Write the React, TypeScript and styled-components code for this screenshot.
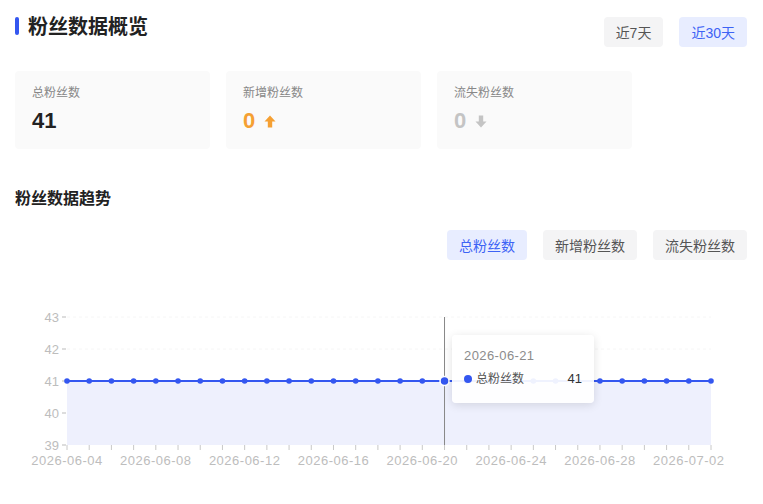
import React from 'react'
import styled, { createGlobalStyle } from 'styled-components'

const GlobalStyle = createGlobalStyle`
  html, body { margin: 0; padding: 0; background: #fff; }
  body {
    font-family: "Liberation Sans", "Noto Sans CJK SC", sans-serif;
    color: #333;
  }
`

const Page = styled.div`
  width: 763px;
  height: 504px;
  box-sizing: border-box;
  padding: 14px 16px 0 15px;
  overflow: hidden;
`

const HeaderRow = styled.div`
  display: flex;
  justify-content: space-between;
  align-items: flex-start;
`

const TitleWrap = styled.div`
  display: flex;
  align-items: center;
  gap: 9px;
  height: 24px;
`

const TitleBar = styled.span`
  width: 4px;
  height: 18px;
  border-radius: 2px;
  background: #3457f0;
`

const Title = styled.h1`
  margin: 0;
  font-size: 20px;
  line-height: 24px;
  font-weight: 700;
  color: #222;
  font-family: "Noto Sans CJK SC", sans-serif;
`

const BtnGroup = styled.div<{ $mt?: number }>`
  display: flex;
  gap: 16px;
  margin-top: ${p => p.$mt ?? 0}px;
  justify-content: flex-end;
`

const Pill = styled.button<{ $active?: boolean }>`
  height: 30px;
  padding: 0 12px;
  border: none;
  border-radius: 4px;
  font-size: 14px;
  font-family: "Liberation Sans", "Noto Sans CJK SC", sans-serif;
  background: ${p => (p.$active ? '#e8edff' : '#f4f4f5')};
  color: ${p => (p.$active ? '#3d63f5' : '#555')};
  cursor: pointer;
`

const Cards = styled.div`
  display: flex;
  gap: 16px;
  margin-top: 24px;
`

const Card = styled.div`
  width: 195px;
  height: 78px;
  box-sizing: border-box;
  padding: 12px 17px;
  background: #fafafa;
  border-radius: 4px;
`

const CardLabel = styled.div`
  font-size: 12px;
  line-height: 18px;
  color: #888;
  font-family: "Noto Sans CJK SC", sans-serif;
`

const CardValue = styled.div<{ $color: string }>`
  display: flex;
  align-items: center;
  gap: 9px;
  margin-top: 7px;
  font-size: 22px;
  line-height: 26px;
  font-weight: 700;
  color: ${p => p.$color};
`

const SectionTitle = styled.h2`
  margin: 36px 0 0;
  font-size: 16px;
  line-height: 24px;
  font-weight: 700;
  color: #222;
  font-family: "Noto Sans CJK SC", sans-serif;
`

const ChartWrap = styled.div`
  position: relative;
  margin-left: -15px;
  width: 763px;
  height: 244px;
`

const Tooltip = styled.div`
  position: absolute;
  left: 452px;
  top: 75px;
  width: 142px;
  height: 68px;
  box-sizing: border-box;
  padding: 10px 12px 0;
  background: rgba(255, 255, 255, 0.92);
  border-radius: 4px;
  box-shadow: 0 2px 10px rgba(0, 0, 0, 0.12);
`

const TipDate = styled.div`
  font-size: 13px;
  line-height: 22px;
  color: #8c8c8c;
  letter-spacing: 0.4px;
`

const TipRow = styled.div`
  display: flex;
  align-items: center;
  margin-top: 2px;
  font-size: 12px;
  line-height: 20px;
  color: #555;
`

const TipDot = styled.span`
  width: 8px;
  height: 8px;
  border-radius: 50%;
  background: #3457f0;
  margin-right: 4px;
`

const TipValue = styled.span`
  margin-left: auto;
  font-size: 13px;
  color: #333;
`

const Arrow = ({ color, down }: { color: string; down?: boolean }) => (
  <svg width="12" height="13" viewBox="0 0 12 13" style={{ transform: down ? 'rotate(180deg)' : undefined }}>
    <path d="M6 0.5 L11.5 6.5 H8.2 V12.5 H3.8 V6.5 H0.5 Z" fill={color} />
  </svg>
)

const OY = 260
const X0 = 67
const X1 = 711
const N = 30
const DX = (X1 - X0) / (N - 1)
const yOf = (v: number) => 381 - (v - 41) * 32 - OY

const start = new Date(Date.UTC(2026, 5, 4))
const dates = Array.from({ length: N }, (_, i) => {
  const d = new Date(start.getTime() + i * 86400000)
  return d.toISOString().slice(0, 10)
})

const HOVER = 17

function Chart() {
  const pts = dates.map((_, i) => [X0 + i * DX, yOf(41)])
  const lineD = pts.map((p, i) => `${i ? 'L' : 'M'}${p[0]} ${p[1]}`).join(' ')
  const base = yOf(39)
  const areaD = `${lineD} L${X1} ${base} L${X0} ${base} Z`
  return (
    <ChartWrap>
      <svg width="763" height="244" style={{ display: 'block' }}>
        {[43, 42].map(v => (
          <line key={v} x1={X0} x2={X1} y1={yOf(v)} y2={yOf(v)} stroke="#f6f6f6" strokeDasharray="3 3" />
        ))}
        <path d={areaD} fill="#eef0fd" />
        {[43, 42, 41, 40, 39].map(v => (
          <g key={v}>
            <line x1={62} x2={66} y1={yOf(v)} y2={yOf(v)} stroke="#bbb" />
            <text x={59} y={yOf(v) + 4.5} textAnchor="end" fontSize="13" fill="#bdbdbd" fontFamily="Liberation Sans, sans-serif">
              {v}
            </text>
          </g>
        ))}
        {pts.map((p, i) => (
          <line key={i} x1={p[0]} x2={p[0]} y1={base} y2={base + 5} stroke="#c8c8c8" />
        ))}
        {dates.map((d, i) =>
          i % 4 === 0 ? (
            <text key={d} x={X0 + i * DX} y={base + 20} textAnchor="middle" fontSize="13" fill="#bdbdbd" letterSpacing="0.5" fontFamily="Liberation Sans, sans-serif">
              {d}
            </text>
          ) : null
        )}
        <line x1={X0 + HOVER * DX} x2={X0 + HOVER * DX} y1={yOf(43)} y2={base} stroke="#888" />
        <path d={lineD} stroke="#3457f0" strokeWidth="2" fill="none" />
        {pts.map((p, i) =>
          i === HOVER ? (
            <circle key={i} cx={p[0]} cy={p[1]} r="4.5" fill="#3457f0" stroke="#fff" strokeWidth="1.5" />
          ) : (
            <circle key={i} cx={p[0]} cy={p[1]} r="2.8" fill="#3457f0" />
          )
        )}
      </svg>
      <Tooltip>
        <TipDate>{dates[HOVER]}</TipDate>
        <TipRow>
          <TipDot />
          <span>总粉丝数</span>
          <TipValue>41</TipValue>
        </TipRow>
      </Tooltip>
    </ChartWrap>
  )
}

export default function App() {
  return (
    <Page>
      <GlobalStyle />
      <HeaderRow>
        <TitleWrap>
          <TitleBar />
          <Title>粉丝数据概览</Title>
        </TitleWrap>
        <BtnGroup $mt={3}>
          <Pill>近7天</Pill>
          <Pill $active>近30天</Pill>
        </BtnGroup>
      </HeaderRow>
      <Cards>
        <Card>
          <CardLabel>总粉丝数</CardLabel>
          <CardValue $color="#222">41</CardValue>
        </Card>
        <Card>
          <CardLabel>新增粉丝数</CardLabel>
          <CardValue $color="#f5a033">
            0 <Arrow color="#f5a033" />
          </CardValue>
        </Card>
        <Card>
          <CardLabel>流失粉丝数</CardLabel>
          <CardValue $color="#c4c4c4">
            0 <Arrow color="#c4c4c4" down />
          </CardValue>
        </Card>
      </Cards>
      <SectionTitle>粉丝数据趋势</SectionTitle>
      <BtnGroup style={{ marginTop: 21 }}>
        <Pill $active>总粉丝数</Pill>
        <Pill>新增粉丝数</Pill>
        <Pill>流失粉丝数</Pill>
      </BtnGroup>
      <Chart />
    </Page>
  )
}
